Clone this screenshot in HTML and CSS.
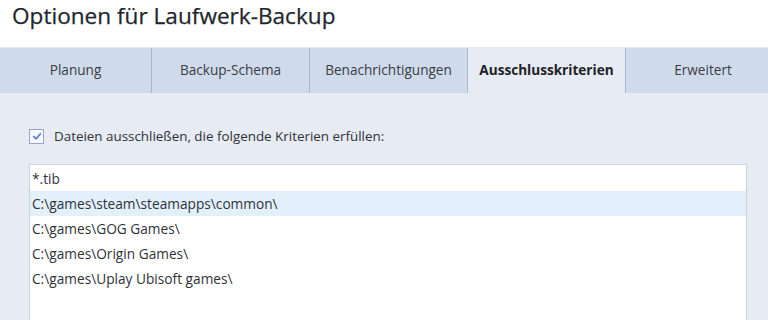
FILE: index.html
```html
<!DOCTYPE html>
<html lang="de">
<head>
<meta charset="utf-8">
<title>Optionen für Laufwerk-Backup</title>
<link rel="stylesheet" href="styles.css">
</head>
<body>
<div class="window">
  <header class="header">
    <h1 class="title">Optionen für Laufwerk-Backup</h1>
  </header>
  <nav class="tabs">
    <div class="tab tab-first">Planung</div>
    <div class="tab">Backup-Schema</div>
    <div class="tab">Benachrichtigungen</div>
    <div class="tab tab-active">Ausschlusskriterien</div>
    <div class="tab tab-last">Erweitert</div>
  </nav>
  <main class="content">
    <label class="check-row">
      <span class="checkbox">
        <svg width="10" height="10" viewBox="0 0 10 10"><path d="M1.2 5.2 L4 7.8 L8.8 2.2" fill="none" stroke="#4a7fcf" stroke-width="1.6"/></svg>
      </span>
      <span class="check-label">Dateien ausschließen, die folgende Kriterien erfüllen:</span>
    </label>
    <div class="list">
      <div class="row">*.tib</div>
      <div class="row row-selected">C:\games\steam\steamapps\common\</div>
      <div class="row">C:\games\GOG Games\</div>
      <div class="row">C:\games\Origin Games\</div>
      <div class="row">C:\games\Uplay Ubisoft games\</div>
    </div>
  </main>
</div>
</body>
</html>
```

FILE: styles.css
```css
* { box-sizing: border-box; }
html, body { margin: 0; padding: 0; }
body {
  width: 768px;
  height: 320px;
  overflow: hidden;
  background: #e6ebf4;
  font-family: "Open Sans", "Noto Sans", sans-serif;
  color: #333;
}
.window { display: flex; flex-direction: column; height: 320px; overflow: hidden; }
.header {
  flex: 0 0 48px;
  background: #fff;
  border-bottom: 1px solid #e4e9f0;
  padding: 0 12px;
}
.title {
  margin: 0;
  font-size: 22.6px;
  font-weight: 400;
  line-height: 32px;
  color: #22262c;
  -webkit-text-stroke: 0.25px #22262c;
}
.tabs {
  flex: 0 0 45px;
  display: flex;
  background: #cfdbeb;
  overflow: hidden;
}
.tab {
  flex: 0 0 158px;
  display: flex;
  align-items: center;
  justify-content: center;
  border-right: 1px solid #a8b7cb;
  font-size: 13.6px;
  color: #3a3d42;
  padding-bottom: 2px;
}
.tab-first { flex-basis: 152px; }
.tab-last { flex-basis: 158px; border-right: none; padding-right: 4px; }
.tab-active {
  background: #e6ebf4;
  font-weight: 700;
  color: #202226;
}
.content {
  flex: 1 1 auto;
  min-height: 0;
  display: flex;
  flex-direction: column;
  padding: 35px 21px 0 29px;
}
.check-row {
  display: flex;
  align-items: center;
  height: 16px;
  gap: 10px;
}
.checkbox {
  width: 15px;
  height: 15px;
  border: 1px solid #93a6c6;
  background: #f6f8fc;
  display: flex;
  align-items: center;
  justify-content: center;
}
.check-label { font-size: 13.4px; color: #2f3237; }
.list {
  flex: 1 1 auto;
  min-height: 0;
  margin-top: 20px;
  background: #fff;
  border: 1px solid #c9d3e1;
  border-bottom: none;
  padding-top: 1px;
}
.row {
  height: 25px;
  line-height: 25px;
  padding-left: 2px;
  font-size: 13.7px;
  color: #2f3237;
  white-space: nowrap;
}
.row-selected { background: #e3f0fc; }
```
